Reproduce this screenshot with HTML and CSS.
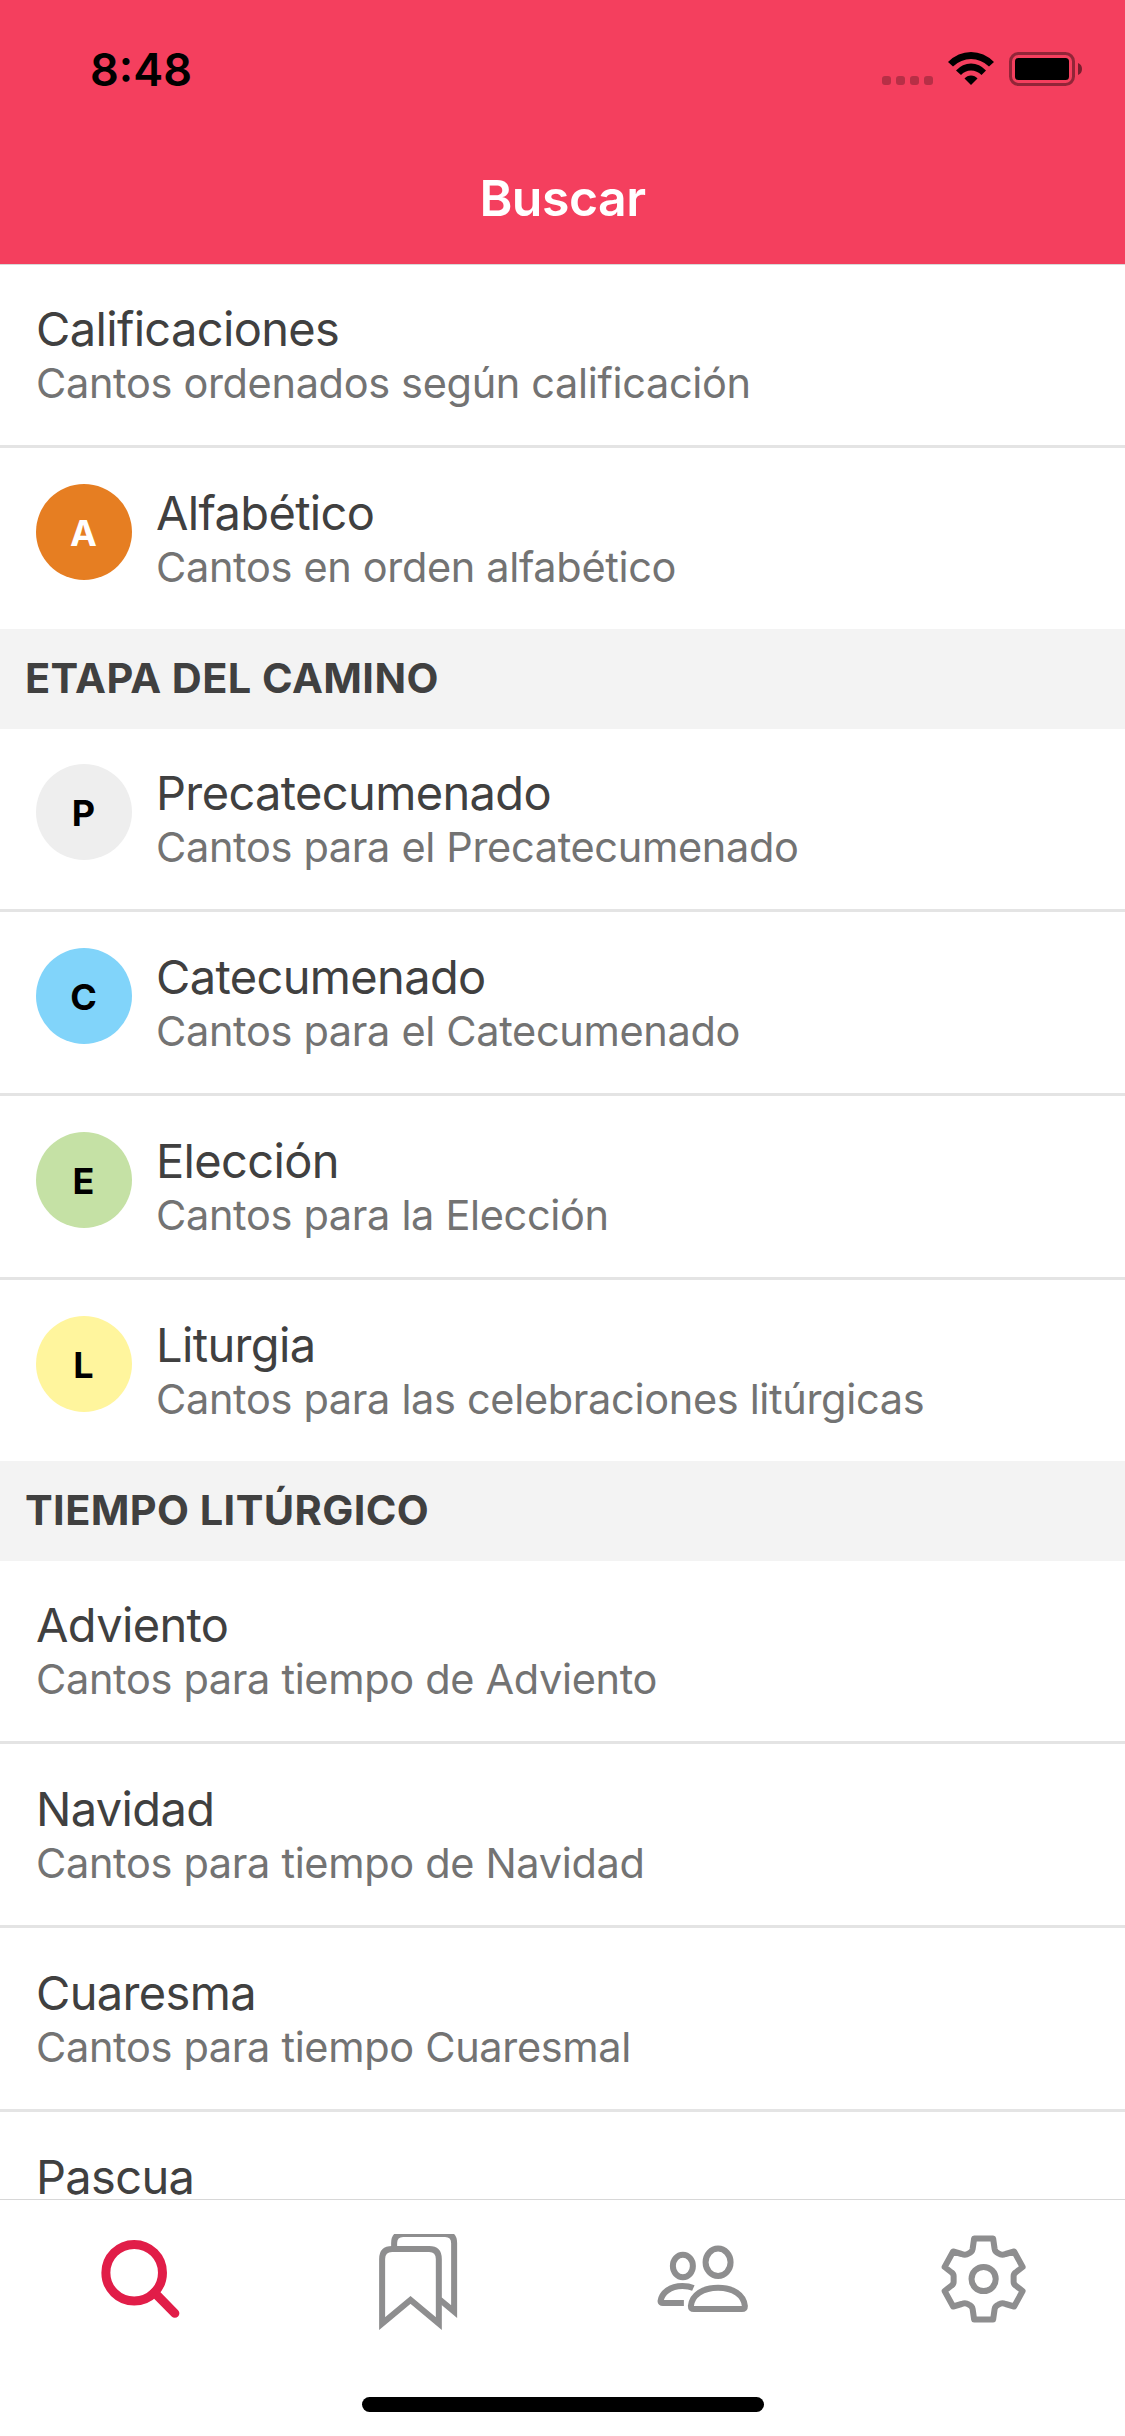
FILE: index.html
```html
<!DOCTYPE html>
<html lang="es">
<head>
<meta charset="utf-8">
<title>Buscar</title>
<link rel="stylesheet" href="styles.css">
</head>
<body>
<div class="app">
  <header class="header">
    <div class="status">
      <time class="clock">8:48</time>
      <svg class="status-icons" width="202" height="36" viewBox="0 0 202 36">
        <g fill-opacity=".25"><rect x="0" y="24" width="9" height="9" rx="3"/><rect x="14" y="24" width="9" height="9" rx="3"/><rect x="28" y="24" width="9" height="9" rx="3"/><rect x="42" y="24" width="9" height="9" rx="3"/></g>
        <path d="M66 10Q76 0 89 0T112 10L107 14.500Q99 7 89 7T71 14.500Z"/>
        <path d="M74 18.500Q80.500 11.500 89 11.500T104 18.500L99.500 23Q95 18.500 89 18.500T79 23Z"/>
        <path d="M82.500 26.500Q85 23.500 89 23.500T95.500 26.500L89 33Z"/>
        <rect x="128.500" y="1.500" width="63" height="31" rx="8" fill="none" stroke="#000" stroke-opacity=".4" stroke-width="3"/>
        <rect x="133" y="6" width="54" height="22" rx="3.500"/>
        <path d="M196 11Q200 12.500 200 17T196 23Z" fill-opacity=".5"/>
      </svg>
    </div>
    <h1 class="title">Buscar</h1>
  </header>
  <main class="list">
    <div class="row"><div class="text"><div class="name">Calificaciones</div><div class="note">Cantos ordenados según calificación</div></div></div>
    <div class="row divided"><span class="badge orange">A</span><div class="text"><div class="name">Alfabético</div><div class="note">Cantos en orden alfabético</div></div></div>
    <h2 class="section">ETAPA DEL CAMINO</h2>
    <div class="row"><span class="badge gray">P</span><div class="text"><div class="name">Precatecumenado</div><div class="note">Cantos para el Precatecumenado</div></div></div>
    <div class="row divided"><span class="badge blue">C</span><div class="text"><div class="name">Catecumenado</div><div class="note">Cantos para el Catecumenado</div></div></div>
    <div class="row divided"><span class="badge green">E</span><div class="text"><div class="name">Elección</div><div class="note">Cantos para la Elección</div></div></div>
    <div class="row divided"><span class="badge yellow">L</span><div class="text"><div class="name">Liturgia</div><div class="note">Cantos para las celebraciones litúrgicas</div></div></div>
    <h2 class="section">TIEMPO LITÚRGICO</h2>
    <div class="row"><div class="text"><div class="name">Adviento</div><div class="note">Cantos para tiempo de Adviento</div></div></div>
    <div class="row divided"><div class="text"><div class="name">Navidad</div><div class="note">Cantos para tiempo de Navidad</div></div></div>
    <div class="row divided"><div class="text"><div class="name">Cuaresma</div><div class="note">Cantos para tiempo Cuaresmal</div></div></div>
    <div class="row divided last"><div class="text"><div class="name">Pascua</div></div></div>
  </main>
  <nav class="tabs">
    <div class="tab-row">
      <a class="tab active"><svg width="110" height="110" viewBox="85.625 2225 110 110"><circle cx="133.800" cy="2272.700" r="28.300"/><path d="M154 2292.500L174.500 2313.300"/></svg></a>
      <a class="tab"><svg width="110" height="110" viewBox="366.875 2225 110 110"><clipPath id="back-top"><path d="M366 2234H480V2340H366Z"/></clipPath><path clip-path="url(#back-top)" d="M394 2248V2243Q394 2234 403 2234H445Q454 2234 454 2243V2311.500L439.500 2299.500"/><path d="M382 2323.500V2259Q382 2249 392 2249H429Q438.700 2249 438.700 2259V2323.500L410.400 2300Z"/></svg></a>
      <a class="tab"><svg width="110" height="110" viewBox="648.125 2225 110 110"><ellipse cx="683" cy="2266" rx="10" ry="11.200"/><ellipse cx="718.200" cy="2262.300" rx="12.500" ry="13.700"/><path d="M693.500 2288Q689 2286 682.500 2286C670 2286 662 2293 660.700 2301Q660.500 2303 663 2303H684M691 2306C692 2295 703 2287.700 718.200 2287.700S744 2295 745 2306Q745 2309 742 2309H694Q691 2309 691 2306Z"/></svg></a>
      <a class="tab gear"><svg width="110" height="110" viewBox="929.375 2225 110 110"><circle cx="984" cy="2279" r="12.100"/><path d="M974.500 2238.500H993.500L995 2249Q995.500 2252 999 2253.500Q1002 2255.500 1006 2254L1014.500 2251.500L1023 2267L1016 2272.500Q1014 2274 1014 2276V2282Q1014 2284 1016 2285.500L1023 2291L1014.500 2306.500L1006 2304Q1002 2302.500 999 2304.500Q995.500 2306 995 2309L993.500 2319.500H974.500L973 2309Q972.500 2306 969 2304.500Q966 2302.500 962 2304L953.500 2306.500L945 2291L952 2285.500Q954 2284 954 2282V2276Q954 2274 952 2272.500L945 2267L953.500 2251.500L962 2254Q966 2255.500 969 2253.500Q972.500 2252 973 2249Z"/></svg></a>
    </div>
    <div class="home"></div>
  </nav>
</div>
</body>
</html>
```
FILE: styles.css
```css
* { box-sizing: border-box; }
body { margin: 0; background: #fff; font-family: Inter, "Liberation Sans", sans-serif; }
.app { width: 1125px; height: 2436px; display: flex; flex-direction: column; overflow: hidden; }
.header { position: relative; height: 264px; flex: none; background: #f43f5e; box-shadow: 0 1px #d8d8d8; }
.status { height: 132px; padding: 52px 41px 0 90px; display: flex; justify-content: space-between; align-items: flex-start; }
.clock { font-size: 45px; line-height: 36px; font-weight: 600; }
.title { margin: 0; text-align: center; color: #fff; font-size: 50px; font-weight: 600; line-height: 132px; letter-spacing: -.5px; }
.list { flex: 1; min-height: 0; }
.row { height: 181px; padding: 36px 36px 0; display: flex; gap: 24px; }
.row.divided { height: 184px; border-top: 3px solid #e4e4e4; }
.row.last { height: 87px; }
.badge { width: 96px; height: 96px; border-radius: 50%; text-align: center; text-indent: -1px; font-size: 36px; font-weight: 700; line-height: 99px; }
.orange { background: #e67e22; color: #fff; }
.gray { background: #eee; }
.blue { background: #81d4fa; }
.green { background: #c5e1a5; }
.yellow { background: #fff59d; }
.name { color: #404040; font-size: 47px; line-height: 58px; letter-spacing: -.65px; }
.note { color: #737373; font-size: 41.5px; line-height: 50px; letter-spacing: -.34px; }
.text { white-space: nowrap; }
.section { margin: 0; height: 99px; padding-left: 25px; background: #f3f3f3; box-shadow: 0 1px #f3f3f3; color: #404040; font-size: 41.5px; font-weight: 700; line-height: 99px; letter-spacing: .4px; }
.tabs { height: 237px; flex: none; border-top: 1px solid #d8d8d8; display: flex; flex-direction: column; align-items: center; }
.tab-row { width: 100%; display: grid; grid-template-columns: repeat(4, 1fr); height: 197px; padding-top: 25px; }
.tab { display: flex; justify-content: center; color: #8e8e8f; }
.tab svg { fill: none; stroke: currentColor; stroke-width: 6; stroke-linejoin: miter; }
.tab.gear svg { stroke-linejoin: round; }
.tab.active { color: #e11d48; }
.tab.active svg { stroke-width: 9; stroke-linecap: round; }
.home { width: 402px; height: 15px; border-radius: 8px; background: #000; }
```
